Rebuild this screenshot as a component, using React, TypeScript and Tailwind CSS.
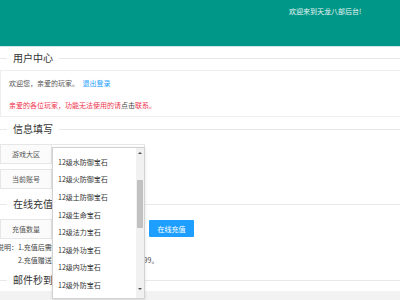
import React from "react";

const gems = [
  "12级水防御宝石",
  "12级火防御宝石",
  "12级土防御宝石",
  "12级生命宝石",
  "12级法力宝石",
  "12级外功宝石",
  "12级内功宝石",
  "12级外防宝石",
];

function Legend({ title }: { title: string }) {
  return (
    <div className="flex h-[12px] items-center">
      <div className="h-px w-[7px] bg-[#e8e8e8]" />
      <span className="px-[6px] text-[10px] leading-[12px] text-[#333]">{title}</span>
      <div className="h-px flex-1 bg-[#e8e8e8]" />
    </div>
  );
}

function FormRow({ label, children }: { label: string; children?: React.ReactNode }) {
  return (
    <div className="flex h-[20px]">
      <div className="flex w-[52px] items-center justify-center border border-[#e6e6e6] bg-[#fbfbfb] text-[#555]">
        {label}
      </div>
      <div className="w-[93px] border border-l-0 border-[#e6e6e6] bg-white" />
      {children}
    </div>
  );
}

export default function App() {
  return (
    <div className="relative h-[300px] overflow-hidden bg-white font-['Noto_Sans_CJK_SC',sans-serif] text-[7px] leading-[8px] text-[#555]">
      {/* header */}
      <div className="h-[47px] border-b border-[#cfe9e6] bg-[#009688] pl-[289px] pt-[7px] text-white/90">
        欢迎来到天龙八部后台!
      </div>

      <div className="mt-[5px]">
        <Legend title="用户中心" />
      </div>
      <div className="mt-[6px] h-[47px] border-y border-l border-[#eee] pl-[8px] pt-[8px]">
        <div>
          欢迎您，亲爱的玩家。 <span className="ml-[2px] text-[#1E9FFF]">退出登录</span>
        </div>
        <div className="mt-[14px] text-[#f0344e]">
          亲爱的各位玩家，功能无法使用的请<span className="text-[#444]">点击</span>联系。
        </div>
      </div>

      <div className="mt-[6px]">
        <Legend title="信息填写" />
      </div>
      <div className="mt-[9px] flex flex-col gap-[5px]">
        <FormRow label="游戏大区" />
        <FormRow label="当前账号" />
      </div>

      <div className="mt-[9px]">
        <Legend title="在线充值" />
      </div>
      <div className="mt-[9px]">
        <FormRow label="充值数量">
          <button className="ml-[4px] mt-px h-[17px] w-[45px] rounded-[1px] bg-[#1E9FFF] text-[7px] text-white">
            在线充值
          </button>
        </FormRow>
      </div>
      <div className="-ml-[3px] mt-[2px] whitespace-nowrap leading-[13px] text-[#444]">
        <div>说明：1.充值后需要重新登录游戏才能到账。</div>
        <div className="pl-[21px]">2.充值赠送VIP积分，VIP积分总上限为9999。</div>
      </div>

      <div className="mt-[7px]">
        <Legend title="邮件秒到" />
      </div>
      <div className="mt-[5px] h-[20px] bg-[#f2f2f2]" />

      {/* open select list */}
      <div className="absolute left-[52px] top-[147px] flex h-[152px] w-[93px] border border-[#d2d2d2] bg-white shadow-[0_1px_3px_rgba(0,0,0,0.12)]">
        <div className="flex-1 pl-[5px] pt-[5px] text-[#333]">
          {gems.map((g) => (
            <div key={g} className="flex h-[17.6px] items-center">
              {g}
            </div>
          ))}
        </div>
        <div className="flex w-[8px] flex-col bg-[#f1f1f1]">
          <div className="flex h-[9px] items-center justify-center">
            <div className="h-0 w-0 border-x-[2px] border-b-[2px] border-x-transparent border-b-[#505050]" />
          </div>
          <div className="flex-1">
            <div className="mx-auto mt-[23px] h-[48px] w-[6px] bg-[#c1c1c1]" />
          </div>
          <div className="flex h-[12px] items-start justify-center pt-[2px]">
            <div className="h-0 w-0 border-x-[2px] border-t-[2px] border-x-transparent border-t-[#505050]" />
          </div>
        </div>
      </div>
    </div>
  );
}
